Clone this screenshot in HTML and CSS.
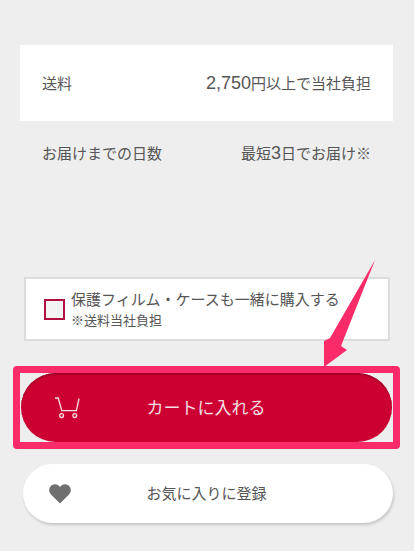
FILE: index.html
```html
<!DOCTYPE html>
<html lang="ja">
  <head>
    <meta charset="utf-8" />
    <meta name="viewport" content="width=device-width, initial-scale=1.0" />
    <title>カートに入れる</title>
    <link rel="stylesheet" href="styles.css">
  </head>
  <body>
    <div class="container">
      <div class="info-row info-row-white">
        <span>送料</span>
        <span><span class="num">2,750</span>円以上で当社負担</span>
      </div>
      <div class="info-row">
        <span>お届けまでの日数</span>
        <span>最短<span class="num">3</span>日でお届け※</span>
      </div>

      <label class="option">
        <span class="checkbox"></span>
        <span class="option-text">
          <span class="option-title">保護フィルム・ケースも一緒に購入する</span>
          <span class="option-note">※送料当社負担</span>
        </span>
      </label>

      <button type="button" class="button button-cart">
        <svg class="icon-cart" viewBox="0 0 26 22" width="26" height="22" fill="none" stroke="currentColor" stroke-width="1.3">
          <path d="M1 1h3.2l3.6 12.6h14.6L25 1.5" />
          <circle cx="7.6" cy="18.6" r="1.9" />
          <circle cx="20.8" cy="18.6" r="1.9" />
        </svg>
        カートに入れる
      </button>

      <button type="button" class="button button-fav">
        <svg class="icon-heart" viewBox="0 0 22 20" width="22" height="20">
          <path fill="currentColor" d="M11 19.5 1.8 10.2C-.6 7.6-.1 3.6 2.4 1.6 5 -.4 8.8 0 11 3c2.2-3 6-3.4 8.6-1.4 2.5 2 3 6 .6 8.6z" />
        </svg>
        お気に入りに登録
      </button>

      <!-- annotation drawn over the screenshot -->
      <div class="mark-box"></div>
      <svg class="mark-arrow" viewBox="0 0 60 112" width="60" height="112">
        <path fill="#fb2a68" d="M56 0 11 78 5 81 5 107 28 90 22 86z" />
      </svg>
    </div>
  </body>
</html>
```

FILE: styles.css
```css
html,
body {
  height: 100%;
}
body {
  margin: 0;
  padding: 0;
  background-color: #eeeeee;
}
.container {
  position: relative;
  box-sizing: border-box;
  height: 551px;
  overflow: hidden;
  padding: 45px 21px 0 20px;
  display: flex;
  flex-direction: column;
  font-family: "Noto Sans CJK JP", "Liberation Sans", sans-serif;
  color: #555555;
  font-size: 15px;
  line-height: 20px;
}
.num {
  font-family: "Liberation Sans", sans-serif;
  font-size: 18px;
}
.info-row {
  display: flex;
  justify-content: space-between;
  align-items: center;
  height: 64px;
  padding: 0 22px;
}
.info-row-white {
  height: 76px;
  background-color: white;
}
.option {
  box-sizing: border-box;
  display: flex;
  align-items: center;
  gap: 6px;
  height: 64px;
  margin: 92px 3px 0 4px;
  padding-left: 18px;
  background-color: white;
  border: 2px solid #dcdcdc;
}
.checkbox {
  box-sizing: border-box;
  flex: none;
  width: 21px;
  height: 21px;
  border: 2px solid #b0103f;
  background-color: #f3f3f3;
}
.option-text {
  display: flex;
  flex-direction: column;
  gap: 3px;
  margin-top: -1px;
}
.option-title {
  line-height: 20px;
}
.option-note {
  font-size: 13px;
  line-height: 16px;
}
.button {
  position: relative;
  display: block;
  flex: none;
  padding: 0;
  border: none;
  font-family: inherit;
  text-align: center;
  cursor: pointer;
}
.button-cart {
  height: 69px;
  margin: 32px 1px 0 1px;
  padding: 0 1px 3px 0;
  border-radius: 35px;
  background-color: #cc0033;
  box-shadow: inset 0 2px 1px #a8002a;
  color: #f6dfe4;
  font-size: 17px;
}
.button-fav {
  height: 59px;
  margin: 22px 0 0 3px;
  padding: 0 3px 3px 0;
  border-radius: 30px;
  background-color: white;
  box-shadow: 1px 2px 3px #c4c4c4;
  color: #555555;
  font-size: 15px;
}
.icon-cart {
  position: absolute;
  left: 33px;
  top: 24px;
}
.icon-heart {
  position: absolute;
  left: 26px;
  top: 20px;
  color: #6f6f6f;
}
.mark-box {
  position: absolute;
  left: 13px;
  top: 366px;
  box-sizing: border-box;
  width: 387px;
  height: 83px;
  border: 7px solid #fb2a68;
  border-radius: 4px;
}
.mark-arrow {
  position: absolute;
  left: 319px;
  top: 260px;
}
```
